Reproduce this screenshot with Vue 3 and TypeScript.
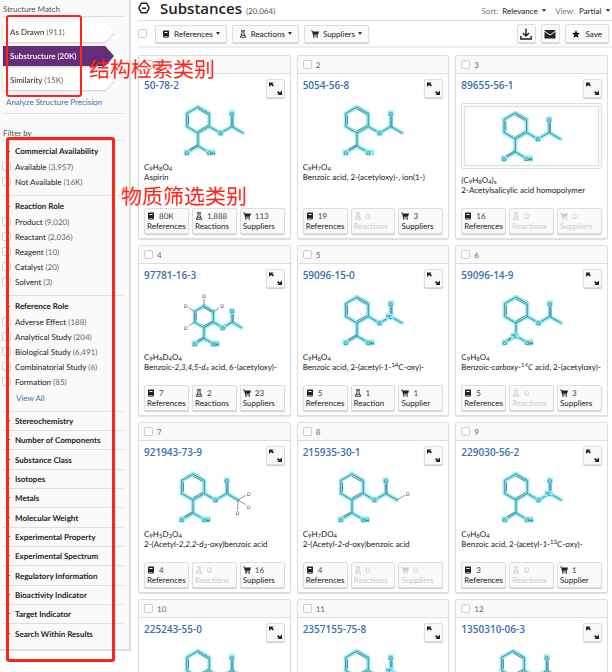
<script setup lang="ts">
interface Option { name: string; count: string }
interface Group { title: string; options: Option[]; more?: boolean }
interface Atom { x: number; y: number; text: string; mass?: string; plain?: boolean }
interface Bond { x1: number; y1: number; x2: number; y2: number; plain?: boolean }
interface Drawing { halo: Bond[]; lines: Bond[]; atoms: Atom[] }
interface Substance {
  id: string
  formula?: string
  name?: string
  refs?: string
  reactions?: string
  suppliers?: string
  framed?: boolean
  variant?: string
  ringX?: number
}

const groups: Group[] = [
  { title: 'Commercial Availability', options: [
    { name: 'Available', count: '3,957' }, { name: 'Not Available', count: '16K' },
  ] },
  { title: 'Reaction Role', options: [
    { name: 'Product', count: '9,020' }, { name: 'Reactant', count: '2,036' },
    { name: 'Reagent', count: '10' }, { name: 'Catalyst', count: '20' }, { name: 'Solvent', count: '3' },
  ] },
  { title: 'Reference Role', more: true, options: [
    { name: 'Adverse Effect', count: '188' }, { name: 'Analytical Study', count: '204' },
    { name: 'Biological Study', count: '6,491' }, { name: 'Combinatorial Study', count: '6' },
    { name: 'Formation', count: '85' },
  ] },
]

const collapsed: string[] = [
  'Stereochemistry', 'Number of Components', 'Substance Class', 'Isotopes', 'Metals',
  'Molecular Weight', 'Experimental Property', 'Experimental Spectrum', 'Regulatory Information',
  'Bioactivity Indicator', 'Target Indicator', 'Search Within Results',
]

const matches = [
  { name: 'As Drawn', count: '911', active: false },
  { name: 'Substructure', count: '20K', active: true },
  { name: 'Similarity', count: '15K', active: false },
]

const c9h8o4 = 'C<sub>9</sub>H<sub>8</sub>O<sub>4</sub>'

const substances: Substance[] = [
  { id: '50-78-2', formula: c9h8o4, name: 'Aspirin', refs: '80K', reactions: '1,888', suppliers: '113' },
  { id: '5054-56-8', formula: 'C<sub>9</sub>H<sub>7</sub>O<sub>4</sub>', name: 'Benzoic acid, 2-(acetyloxy)-, ion(1-)', refs: '19', reactions: '0', suppliers: '3', variant: 'ion' },
  { id: '89655-56-1', formula: `(${c9h8o4})<sub>x</sub>`, name: '2-Acetylsalicylic acid homopolymer', refs: '16', reactions: '0', suppliers: '0', framed: true },
  { id: '97781-16-3', formula: 'C<sub>9</sub>H<sub>4</sub>D<sub>4</sub>O<sub>4</sub>', name: 'Benzoic-<i>2,3,4,5-d<sub>4</sub></i> acid, 6-(acetyloxy)-', refs: '7', reactions: '2', suppliers: '23', variant: 'd4', ringX: 60 },
  { id: '59096-15-0', formula: c9h8o4, name: 'Benzoic acid, 2-(acetyl-<i>1</i>-<sup>14</sup>C-oxy)-', refs: '5', reactions: '1', suppliers: '1', variant: 'acetyl14' },
  { id: '59096-14-9', formula: c9h8o4, name: 'Benzoic-<i>carboxy</i>-<i><sup>14</sup>C</i> acid, 2-(acetyloxy)-', refs: '5', reactions: '0', suppliers: '3', variant: 'acid14' },
  { id: '921943-73-9', formula: 'C<sub>9</sub>H<sub>5</sub>D<sub>3</sub>O<sub>4</sub>', name: '2-(Acetyl-<i>2,2,2-d<sub>3</sub></i>-oxy)benzoic acid', refs: '4', reactions: '0', suppliers: '16', variant: 'd3', ringX: 49 },
  { id: '215935-30-1', formula: 'C<sub>9</sub>H<sub>7</sub>DO<sub>4</sub>', name: '2-(Acetyl-<i>2-d</i>-oxy)benzoic acid', refs: '4', reactions: '0', suppliers: '0', variant: 'd1', ringX: 49 },
  { id: '229030-56-2', formula: c9h8o4, name: 'Benzoic acid, 2-(acetyl-<i>1</i>-<sup>13</sup>C-oxy)-', refs: '3', reactions: '0', suppliers: '1', variant: 'acetyl13' },
  { id: '225243-55-0' },
  { id: '2357155-75-8', variant: 'acetyl13' },
  { id: '1350310-06-3', variant: 'methyl13', ringX: 51 },
]

// Points are in bond units: x steps of cos(30°), y steps of one bond, origin at the top ring atom.
function draw(s: Substance): Drawing {
  const b = s.variant === 'd4' ? 10.8 : 13
  const dx = b * 0.866
  const ox = s.ringX ?? 54
  const oy = s.variant === 'd4' ? 15 : 6
  const X = (u: number) => ox + u * dx
  const Y = (u: number) => oy + u * b
  const bond = (a: number, c: number, d: number, e: number, plain = false): Bond =>
    ({ x1: X(a), y1: Y(c), x2: X(d), y2: Y(e), plain })
  const shift = (l: Bond, x: number, y: number): Bond =>
    ({ x1: l.x1 + x, y1: l.y1 + y, x2: l.x2 + x, y2: l.y2 + y })

  const halo: Bond[] = [
    bond(0, 0, 1, 0.5), bond(1, 0.5, 1, 1.5), bond(1, 1.5, 0, 2), bond(0, 2, -1, 1.5),
    bond(-1, 1.5, -1, 0.5), bond(-1, 0.5, 0, 0), bond(1, 1.5, 2, 2), bond(2, 2, 3, 1.5),
    bond(3, 1.5, 3, 0.5), bond(3, 1.5, 4, 2), bond(0, 2, 0, 3), bond(0, 3, -1, 3.5), bond(0, 3, 1, 3.5),
  ]
  const lines: Bond[] = [
    ...halo,
    bond(0, 0.16, 0.86, 0.59), bond(0.86, 1.41, 0, 1.84), bond(-0.84, 1.35, -0.84, 0.65),
    shift(halo[8], 1.2, 0), shift(halo[11], -0.6, -1.2),
  ]
  const atoms: Atom[] = [
    { x: X(2), y: Y(2), text: 'O' }, { x: X(3), y: Y(0.5), text: 'O' },
    { x: X(-1), y: Y(3.5), text: 'O' },
    { x: X(1), y: Y(3.5), text: s.variant === 'ion' ? 'O⁻' : 'OH' },
  ]
  const deuterium = (a: number, c: number, d: number, e: number) => {
    lines.push(bond(a, c, d, e, true))
    atoms.push({ x: X(d), y: Y(e), text: 'D', plain: true })
  }
  if (s.variant === 'd4') {
    deuterium(0, 0, 0, -0.95)
    deuterium(1, 0.5, 1.95, 0)
    deuterium(-1, 0.5, -1.95, 0)
    deuterium(-1, 1.5, -1.95, 2)
  }
  if (s.variant === 'd3') {
    deuterium(4, 2, 4.95, 1.5)
    deuterium(4, 2, 4.95, 2.5)
    deuterium(4, 2, 3.95, 3)
  }
  if (s.variant === 'd1') deuterium(4, 2, 4.95, 1.5)
  if (s.variant === 'acetyl14') atoms.push({ x: X(3), y: Y(1.5), text: 'C', mass: '14' })
  if (s.variant === 'acetyl13') atoms.push({ x: X(3), y: Y(1.5), text: 'C', mass: '13' })
  if (s.variant === 'acid14') atoms.push({ x: X(0), y: Y(3), text: 'C', mass: '14' })
  if (s.variant === 'methyl13') atoms.push({ x: X(4), y: Y(2), text: 'CH₃', mass: '13' })
  return { halo, lines, atoms }
}

const cards = substances.map((s, i) => ({
  ...s,
  number: i + 1,
  drawing: draw(s),
  links: s.refs === undefined ? [] : [
    { icon: 'book', count: s.refs, label: 'References' },
    { icon: 'flask', count: s.reactions, label: s.reactions === '1' ? 'Reaction' : 'Reactions' },
    { icon: 'cart', count: s.suppliers, label: s.suppliers === '1' ? 'Supplier' : 'Suppliers' },
  ],
}))

const tools = [
  { icon: 'book', label: 'References' },
  { icon: 'flask', label: 'Reactions' },
  { icon: 'cart', label: 'Suppliers' },
]
</script>

<template>
  <div class="page">
    <svg class="defs" aria-hidden="true">
      <symbol id="book" viewBox="0 0 16 16"><path d="M4 1h10v12h-1v2H4a2 2 0 0 1-2-2V3a2 2 0 0 1 2-2zm0 12h7v1H4zM5 4v2h6V4z" fill="currentColor" fill-rule="evenodd" /></symbol>
      <symbol id="flask" viewBox="0 0 16 16"><path d="M4 1.5h8M6 2v5L2.500 14.500h11L10 7V2M4.500 10.500h7" fill="none" stroke="currentColor" stroke-width="1.800" /></symbol>
      <symbol id="cart" viewBox="0 0 16 16"><path d="M0 1h3l.8 2H16l-2 6.500H5.500l.4 1.500H14v1.500H4.500L2 2.500H0z" fill="currentColor" /><circle cx="6" cy="14" r="1.600" fill="currentColor" /><circle cx="12.500" cy="14" r="1.600" fill="currentColor" /></symbol>
    </svg>

    <aside class="sidebar">
      <h2 class="caption">Structure Match</h2>
      <div class="matches">
        <div v-for="m in matches" :key="m.name" class="match-shadow">
          <button type="button" class="match" :class="{ active: m.active }">{{ m.name }} <span>({{ m.count }})</span></button>
        </div>
      </div>
      <a href="#" class="precision">Analyze Structure Precision</a>
      <h2 class="caption filter-caption">Filter by</h2>
      <section v-for="g in groups" :key="g.title" class="group">
        <h3><svg class="chev" viewBox="0 0 6 6"><path d="M1 4l2-2 2 2" /></svg>{{ g.title }}</h3>
        <label v-for="o in g.options" :key="o.name" class="option">
          <input type="checkbox" class="check"><span>{{ o.name }} <small>({{ o.count }})</small></span>
        </label>
        <a v-if="g.more" href="#" class="more">View All</a>
      </section>
      <ul class="collapsed">
        <li v-for="c in collapsed" :key="c"><svg class="chev" viewBox="0 0 6 6"><path d="M1 2l2 2 2-2" /></svg>{{ c }}</li>
      </ul>
    </aside>

    <main class="main">
      <header class="heading">
        <svg class="logo" viewBox="0 0 12 12"><path d="M3.300 1.200h5.400L11.200 6 8.700 10.800H3.300L.8 6z" /><path d="M4 6.200h4" /></svg>
        <h1>Substances</h1>
        <span class="total">(20,064)</span>
        <div class="sorting">
          <label class="pick">Sort: <select><option>Relevance</option></select><i class="caret"></i></label>
          <label class="pick">View: <select><option>Partial</option></select><i class="caret"></i></label>
        </div>
      </header>

      <div class="toolbar">
        <input type="checkbox" class="check" aria-label="Select all">
        <button v-for="t in tools" :key="t.label" type="button" class="btn tool">
          <svg class="icon"><use :href="'#' + t.icon" /></svg><span>{{ t.label }}</span><i class="caret"></i>
        </button>
        <div class="actions">
          <button type="button" class="btn square" aria-label="Download">
            <svg class="big" viewBox="0 0 12 12"><path d="M6 .5v7.500M3 5l3 3 3-3M.8 8v3h10.400V8" fill="none" stroke="currentColor" stroke-width="1.400" /></svg>
          </button>
          <button type="button" class="btn square" aria-label="Email">
            <svg class="big" viewBox="0 0 12 12"><path d="M.5 2h11v.8L6 6.500.5 2.800z" fill="currentColor" /><path d="M.5 3.800L6 7.500l5.500-3.700V10.500H.5z" fill="currentColor" /></svg>
          </button>
          <button type="button" class="btn save">
            <svg class="star" viewBox="0 0 16 16"><path d="M8 0l2.400 5.400 5.600.6-4.200 3.900L13 16l-5-3-5 3 1.200-6.100L0 6l5.600-.6z" fill="currentColor" /></svg>Save
          </button>
        </div>
      </div>

      <div class="grid">
        <article v-for="c in cards" :key="c.id" class="card">
          <label class="card-head"><input type="checkbox" class="check">{{ c.number }}</label>
          <div class="card-body">
            <div class="id-row">
              <a href="#">{{ c.id }}</a>
              <button type="button" class="btn square" aria-label="Expand">
                <svg class="expand" viewBox="0 0 15 15"><path d="M1 1.500h4.500L4.400 2.700 6 4.300 4.800 5.500 3.200 3.900 1 6zM14 14H9.500l1.100-1.200L9 11.200l1.200-1.200 1.600 1.600L14 9.500z" /></svg>
              </button>
            </div>
            <div class="structure" :class="{ framed: c.framed }">
              <svg class="molecule" viewBox="4 0 132 58">
                <line v-for="(l, i) in c.drawing.halo" :key="'h' + i" class="halo" :x1="l.x1" :y1="l.y1" :x2="l.x2" :y2="l.y2" />
                <line v-for="(l, i) in c.drawing.lines" :key="'l' + i" class="bond" :class="{ plain: l.plain }" :x1="l.x1" :y1="l.y1" :x2="l.x2" :y2="l.y2" />
                <g v-for="(a, i) in c.drawing.atoms" :key="'a' + i" class="atom" :class="{ plain: a.plain }">
                  <rect :x="a.x - (a.mass ? 5 : 3)" :y="a.y - 3" :width="a.text === 'CH₃' ? 14 : a.mass ? 8 : a.text.length > 1 ? 9 : 6" height="6" />
                  <text v-if="a.mass" class="mass" :x="a.x - 5" :y="a.y">{{ a.mass }}</text>
                  <text :x="a.x - 2" :y="a.y + 2">{{ a.text }}</text>
                </g>
              </svg>
            </div>
            <p v-if="c.formula" class="line" v-html="c.formula"></p>
            <p v-if="c.name" class="line name" v-html="c.name"></p>
            <div v-if="c.links.length" class="links">
              <button v-for="l in c.links" :key="l.icon" type="button" class="btn link" :disabled="l.count === '0'">
                <span class="count"><svg class="icon"><use :href="'#' + l.icon" /></svg>{{ l.count }}</span>
                <span>{{ l.label }}</span>
              </button>
            </div>
          </div>
        </article>
      </div>
    </main>

    <div class="note-box match-box"></div>
    <div class="note-box filter-box"></div>
    <strong class="note match-note">结构检索类别</strong>
    <strong class="note filter-note">物质筛选类别</strong>
  </div>
</template>

<style>
body { background: #fff; }
</style>

<style scoped>
.page {
  position: relative;
  display: flex;
  align-items: flex-start;
  gap: 7px;
  height: 100vh;
  overflow: hidden;
  font: 8px/10px Lato, "Open Sans", "Noto Sans CJK SC", sans-serif;
  text-rendering: geometricPrecision;
  color: #222;
}
.page *, .page { box-sizing: border-box; }
.defs { position: absolute; width: 0; height: 0; }
h1, h2, h3, p, ul { margin: 0; padding: 0; }
a { color: #3a70b2; text-decoration: none; }
button, select, input { font: inherit; color: inherit; margin: 0; text-rendering: inherit; }
.check {
  appearance: none;
  flex: none;
  width: 9px;
  height: 9px;
  border: 1px solid #ccc;
  border-radius: 2px;
  background: #fff;
}

.sidebar {
  flex: none;
  width: 131px;
  padding: 4px 6px 5px 3px;
  background: #fafafa;
  border-right: 2px solid #ddd;
  border-bottom: 2px solid #ddd;
}
.caption {
  height: 13px;
  border-bottom: 1px solid #ddd;
  font-size: 8px;
  font-weight: 400;
  color: #555;
}
.matches { display: grid; gap: 4px; padding: 5px 9px 0 0; }
.match-shadow { display: grid; filter: drop-shadow(0 1px 1px #ccc); }
.match {
  height: 20px;
  padding: 0 7px;
  border: 0;
  background: #fff;
  text-align: left;
  clip-path: polygon(0 0, 92% 0, 100% 50%, 92% 100%, 0 100%);
}
.match span { color: #666; }
.match.active { background: #652c77; color: #fff; font-weight: 600; }
.match.active span { color: #fff; }
.precision {
  display: block;
  height: 24px;
  padding: 7px 3px 0;
  border-bottom: 1px solid #ddd;
}
.filter-caption { margin-top: 14px; }
.group { padding: 5px 0 6px; border-bottom: 1px solid #ddd; }
h3 {
  display: flex;
  align-items: center;
  height: 10px;
  margin-bottom: 3px;
  font-size: 8px;
  font-weight: 700;
}
.chev {
  flex: none;
  width: 6px;
  height: 6px;
  margin: 0 4px 0 2px;
  fill: none;
  stroke: #555;
}
.option {
  display: flex;
  align-items: center;
  gap: 4px;
  height: 15px;
  margin-left: -1px;
}
.option small { font-size: 8px; color: #666; }
.more { display: block; padding: 4px 13px 2px; }
.collapsed { list-style: none; }
.collapsed li {
  display: flex;
  align-items: center;
  height: 19px;
  border-bottom: 1px solid #ddd;
  font-weight: 700;
}
.collapsed li:nth-child(3n) { height: 20px; }
.collapsed li:last-child { border: 0; }

.main { flex: 1; min-width: 0; }
.heading {
  display: flex;
  align-items: center;
  height: 21px;
  padding-bottom: 4px;
  border-bottom: 1px solid #ddd;
}
.logo { width: 12px; height: 12px; fill: none; stroke: #222; stroke-width: 1.5; }
h1 { margin-left: 10px; font: 600 15px/20px "Open Sans", sans-serif; text-rendering: auto; color: #222; }
.total { margin: 5px 0 0 4px; color: #555; }
.sorting { display: flex; gap: 9px; margin: 5px 2px 0 auto; }
.pick { display: flex; align-items: center; gap: 4px; color: #777; }
.pick select { appearance: none; border: 0; padding: 0; background: none; color: #222; }
.caret {
  flex: none;
  border: 2px solid transparent;
  border-top: 3px solid #333;
  border-bottom: 0;
}
.toolbar {
  display: flex;
  align-items: center;
  gap: 5px;
  height: 27px;
  padding-right: 3px;
  border-bottom: 2px solid #eee;
}
.toolbar .check { margin-right: 3px; }
.btn {
  display: flex;
  align-items: center;
  justify-content: center;
  padding: 0;
  border: 1px solid #ddd;
  border-radius: 2px;
  background: #fafafa;
  box-shadow: 0 1px 1px #ccc;
}
.tool { height: 18px; padding: 0 6px; }
.tool span { margin: 0 3px 0 4px; }
.icon { flex: none; width: 8px; height: 8px; color: #222; }
.actions { display: flex; gap: 5px; margin-left: auto; color: #222; }
.square { width: 19px; height: 19px; }
.big { width: 12px; height: 12px; }
.save { height: 19px; padding: 0 6px; gap: 6px; }
.star { width: 8px; height: 8px; }

.grid {
  display: grid;
  grid-template-columns: repeat(3, minmax(0, 1fr));
  gap: 6px;
  padding: 7px 4px 0 0;
}
.card {
  display: flex;
  flex-direction: column;
  min-height: 170px;
  border: 1px solid #ddd;
  border-radius: 2px;
  background: #fff;
  box-shadow: 0 1px 1px #ddd;
}
.card-head {
  display: flex;
  align-items: center;
  gap: 4px;
  height: 18px;
  padding: 0 5px;
  border-bottom: 1px solid #ddd;
  background: #fafafa;
  color: #666;
}
.card-body { display: flex; flex: 1; flex-direction: column; padding: 5px 5px 4px; }
.id-row { display: flex; justify-content: space-between; height: 22px; }
.id-row a { font: 600 10px/12px "Open Sans", sans-serif; text-rendering: auto; }
.expand { width: 15px; height: 15px; fill: #222; }
.structure { display: flex; flex: none; justify-content: center; height: 61px; }
.structure.framed {
  height: 66px;
  margin: 2px 0 6px;
  padding: 2px;
  border: 1px solid #ddd;
  border-radius: 2px;
  background: #fafafa;
}
.framed .molecule { box-sizing: content-box; flex: 1; border: 1px solid #ddd; background: #fff; }
.molecule { width: 132px; height: 58px; }
.halo { stroke: #8cebf7; stroke-width: 4; stroke-linecap: round; }
.bond { stroke: #3c6f79; stroke-width: 0.8; }
.bond.plain { stroke: #777; }
.atom rect { fill: #8cebf7; }
.atom.plain rect { fill: #fff; }
.atom text { font-size: 5px; fill: #164650; }
.atom .mass { font-size: 3px; }
.atom.plain text { fill: #444; }
.line { flex: none; height: 10px; white-space: nowrap; }
.name { height: 23px; }
.line :deep(sub), .line :deep(sup) { font-size: 6px; line-height: 0; }
.line :deep(sub) { vertical-align: -1px; }
.line :deep(sup) { vertical-align: 3px; }
.links {
  display: grid;
  grid-template-columns: repeat(3, minmax(0, 1fr));
  gap: 3px;
  margin-top: auto;
}
.link {
  flex-direction: column;
  align-items: flex-start;
  height: 26px;
  padding: 0 2px;
  white-space: nowrap;
}
.link:disabled { color: #ccc; }
.link:disabled .icon { color: #ccc; }
.count { display: flex; align-items: center; gap: 4px; color: #444; }
.link:disabled .count { color: #ccc; }

.note-box { position: absolute; left: 6px; border: 2px solid #ff2415; border-radius: 3px; }
.match-box { top: 15px; width: 76px; height: 82px; }
.filter-box { top: 137px; width: 109px; height: 525px; border-width: 3px; }
.note {
  position: absolute;
  font: 400 21px/24px "Noto Sans CJK SC", sans-serif;
  color: #ff2415;
}
.match-note { left: 89px; top: 57px; }
.filter-note { left: 121px; top: 184px; }
</style>
